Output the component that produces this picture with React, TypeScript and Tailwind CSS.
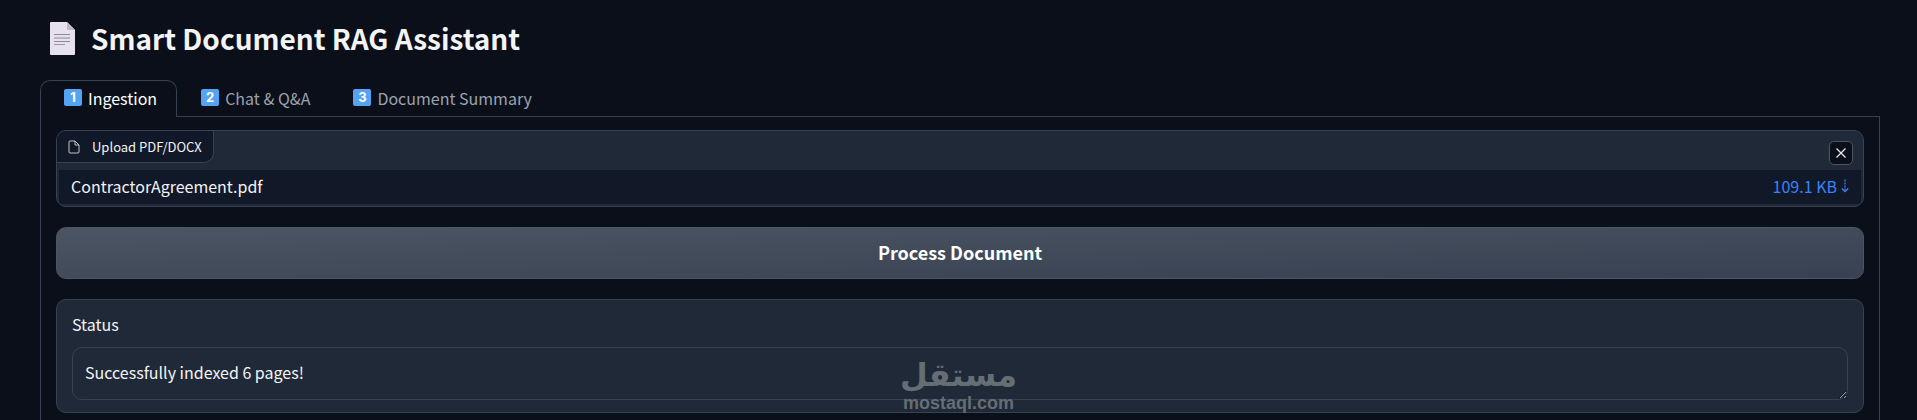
import { useState } from "react";
import clsx from "clsx";

const tabs = [
    { number: "1", label: "Ingestion" },
    { number: "2", label: "Chat & Q&A" },
    { number: "3", label: "Document Summary" },
];

const PageIcon = () => (
    <svg width="25" height="33" viewBox="0 0 25 33" aria-hidden="true">
        <path d="M1 0H17L25 8V32a1 1 0 0 1-1 1H1a1 1 0 0 1-1-1V1a1 1 0 0 1 1-1Z" fill="#e6e1ee" />
        <path d="M17 0L25 8H18a1 1 0 0 1-1-1Z" fill="#bfb9c8" />
        <path d="M4 12.5H20M4 19.5H20" stroke="#8e8a95" />
        <path d="M4 16H20" stroke="#b8b4c0" strokeWidth="2" />
        <path d="M4 22.5H15" stroke="#9c98a3" />
    </svg>
);

const FileIcon = () => (
    <svg width="12" height="14" viewBox="0 0 12 14" fill="none" stroke="#c3c5c9" strokeLinejoin="round" aria-hidden="true">
        <path d="M2 1H7L11 5V12a1 1 0 0 1-1 1H2a1 1 0 0 1-1-1V2a1 1 0 0 1 1-1Z" />
        <path d="M7 1V5H11" />
    </svg>
);

const Watermark = () => (
    <div
        aria-hidden="true"
        className="pointer-events-none absolute top-[356px] left-1/2 flex w-28 -translate-x-1/2 flex-col items-center font-bold text-[#656d75]"
    >
        <span className="font-['DejaVu_Sans',sans-serif] text-[32px] leading-[38px]" lang="ar" dir="rtl">
            مستقل
        </span>
        <span className="font-['Liberation_Sans',sans-serif] text-[18px] leading-[18px]">mostaql.com</span>
    </div>
);

const App = () => {
    const [active, setActive] = useState(0);

    return (
        <div className="relative bg-[#0b0f19] pr-[37px] pb-4 pl-10 font-['Noto_Sans_CJK_SC',sans-serif] text-base text-[#f3f4f6]">
            <h1 className="flex h-20 items-center gap-4 px-[10px] pb-1 text-[28px] font-bold">
                <PageIcon />
                Smart Document RAG Assistant
            </h1>

            {/* Tabs */}
            <div role="tablist" className="flex h-[37px]">
                {tabs.map((tab, index) => (
                    <button
                        key={tab.number}
                        role="tab"
                        aria-selected={active === index}
                        onClick={() => setActive(index)}
                        className={clsx(
                            "flex items-center gap-[6px] border-[#374151]",
                            active === index
                                ? "rounded-t-[10px] border border-b-0 pr-[19px] pb-[3px] pl-[23px] text-white"
                                : "border-b pr-[19px] pb-px pl-6 text-[#9ca3af]",
                        )}
                    >
                        <span className="flex h-[17px] w-[18px] items-center justify-center rounded-[2px] bg-[#55a3f3] font-['Inter',sans-serif] text-[13px] leading-none font-bold text-white">
                            {tab.number}
                        </span>
                        {tab.label}
                    </button>
                ))}
                <div className="grow border-b border-[#374151]" />
            </div>

            <div className="flex flex-col gap-5 rounded-b-[10px] border border-t-0 border-[#374151] px-[15px] pt-[13px] pb-4">
                {/* File upload */}
                <div className="overflow-hidden rounded-[10px] border border-[#374151] bg-[#1f2937]">
                    <div className="flex h-[39px] items-start justify-between pr-[10px]">
                        <div className="flex h-8 items-center gap-3 rounded-br-[10px] border-r border-b border-[#374151] bg-[#111827] px-[11px] text-[13px]">
                            <FileIcon />
                            Upload PDF/DOCX
                        </div>
                        <button
                            aria-label="Clear"
                            className="mt-[10px] flex size-6 items-center justify-center rounded-[5px] border border-[#4b5563] bg-[#0b0f19]"
                        >
                            <svg width="10" height="10" viewBox="0 0 10 10" stroke="#e5e7eb" strokeWidth="1.3" aria-hidden="true">
                                <path d="M0.5 0.5L9.5 9.5M9.5 0.5L0.5 9.5" />
                            </svg>
                        </button>
                    </div>
                    <div className="mx-[2px] mb-[2px] flex h-[34px] items-center justify-between bg-[#111827] px-3 pb-[2px]">
                        <span>ContractorAgreement.pdf</span>
                        <a href="#download" className="flex items-center gap-1 text-[#3b82f6]">
                            109.1 KB
                            <svg width="8" height="14" viewBox="0 0 8 14" fill="none" stroke="#3b82f6" strokeWidth="1.3" aria-hidden="true">
                                <path d="M4 0.5V12" strokeDasharray="2 1" />
                                <path d="M0.8 9.5L4 12.7L7.2 9.5" />
                            </svg>
                        </a>
                    </div>
                </div>

                <button className="h-[52px] rounded-[10px] border border-[#4b5563] bg-linear-to-br from-[#4b5563] to-[#374151] pb-[2px] text-lg font-bold text-white">
                    Process Document
                </button>

                {/* Status */}
                <div className="rounded-[10px] border border-[#374151] bg-[#1f2937] px-[15px] pt-3 pb-3">
                    <label htmlFor="status" className="block h-[35px] leading-6">
                        Status
                    </label>
                    <textarea
                        id="status"
                        rows={1}
                        readOnly
                        defaultValue="Successfully indexed 6 pages!"
                        className="block h-[53px] w-full resize-y overflow-hidden rounded-[10px] border border-[#374151] bg-[#1f2937] px-3 py-3 leading-6 outline-none"
                    />
                </div>
            </div>

            <Watermark />
        </div>
    );
};

export default App;
